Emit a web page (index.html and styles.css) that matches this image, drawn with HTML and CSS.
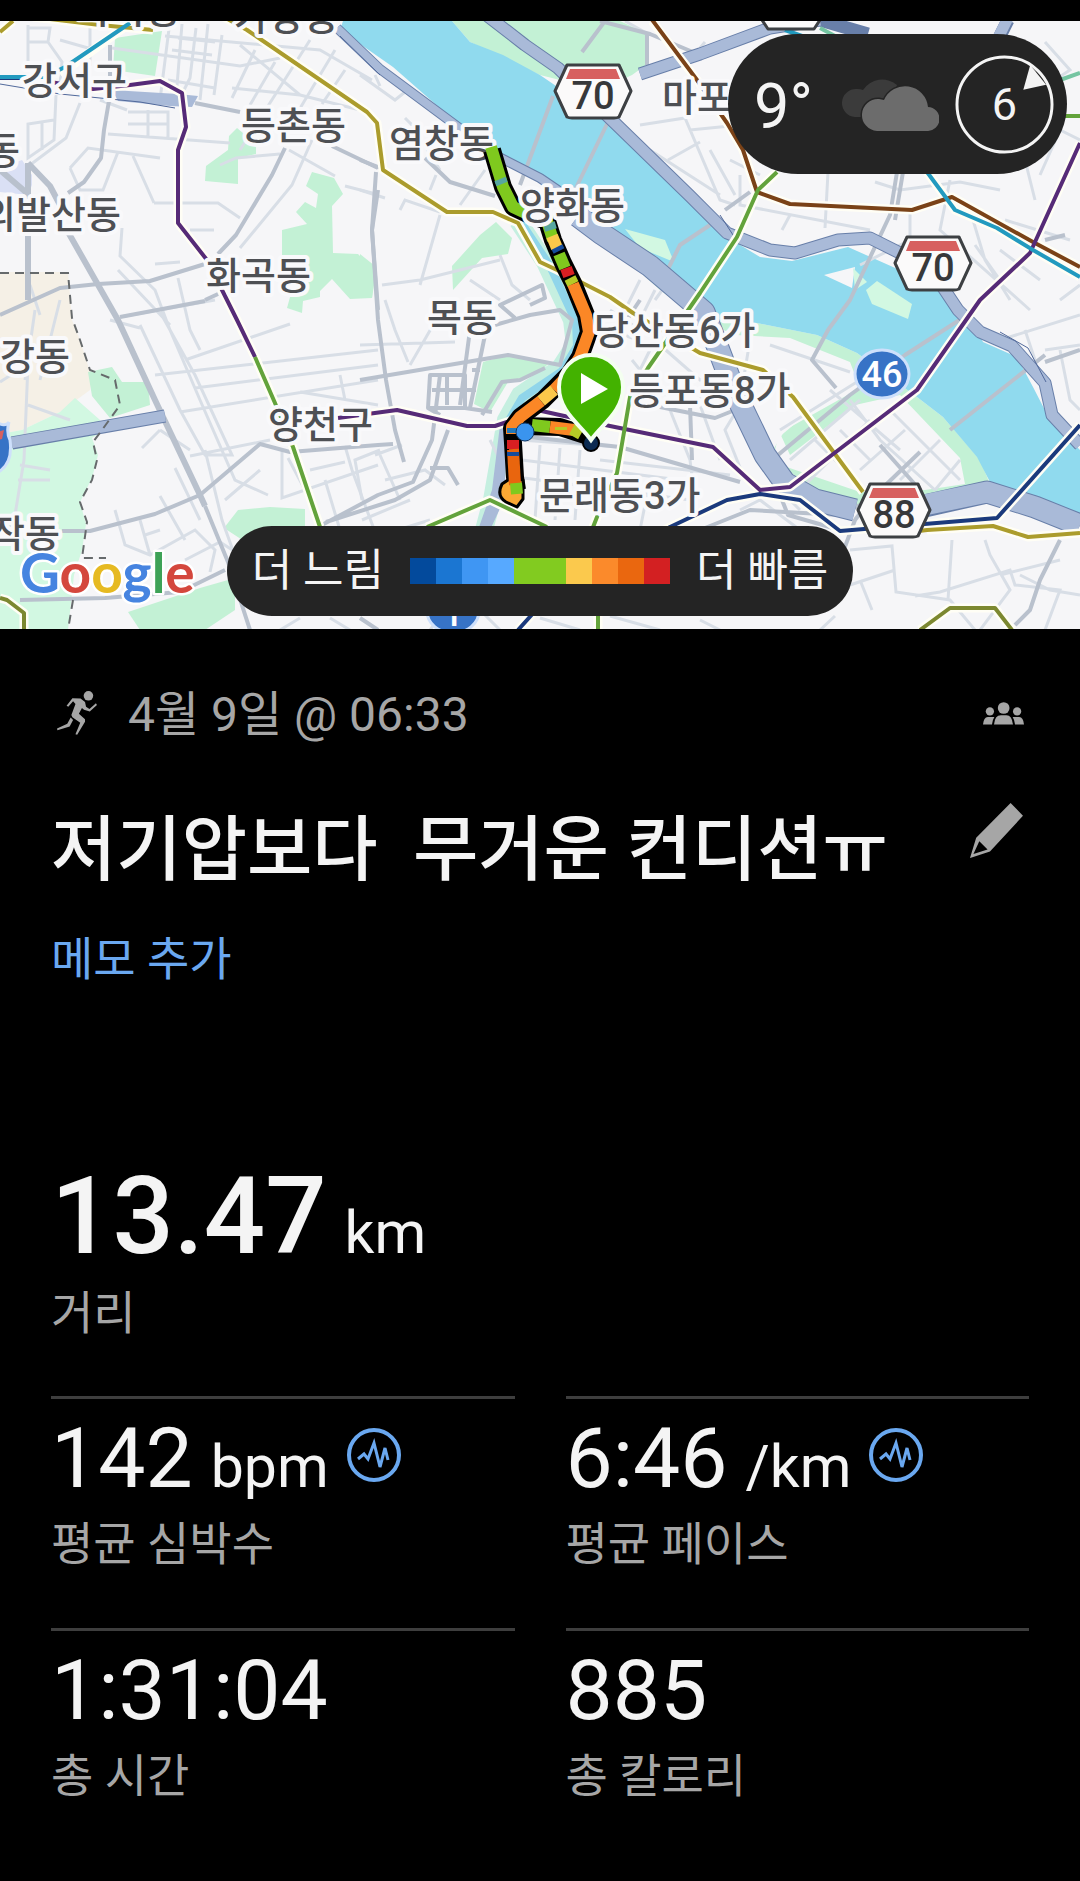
FILE: index.html
```
<!DOCTYPE html>
<html lang="ko">
<head>
    <meta charset="UTF-8">
    <meta name="viewport" content="width=device-width, initial-scale=1">
    <title>저기압보다 무거운 컨디션ㅠ</title>
    <link rel="stylesheet" href="styles.css">
</head>
<body>
    <section class="map">
        <svg class="map-canvas" viewBox="0 21 1080 608" role="img" aria-label="달리기 경로 지도">
            <rect class="land" x="0" y="21" width="1080" height="608"/>

            <!-- Areas -->
            <path class="beige" d="M0 272H68L72 320L80 340L92 378L90 390L60 412L22 430L0 434Z"/>
            <path class="lilac" d="M0 168L22 160L32 175V185L28 195L0 192Z"/>
            <path class="park-light" d="M0 434L22 430L60 412L75 398L100 420L104 430L92 438L98 455L92 478L80 502L86 524L82 550L74 575L68 630H0Z"/>
            <path class="park" d="M115 38L162 31L155 76L113 70Z"/>
            <path class="park" d="M237 128L256 144V154L238 158V184L205 181L206 166L228 150L229 136Z"/>
            <path class="park" d="M312 172L334 178L343 194L332 206L333 253L358 254L376 272L372 298L350 299L332 279L320 291V297L303 301L302 313L287 308L292 290L282 280V230L307 224L296 212L305 202L316 208L318 194L306 186Z"/>
            <path class="park" d="M88 372L112 367L122 382L148 382L150 405L110 418L92 396Z"/>
            <path class="park" d="M224 528L238 510L270 507L305 509V528L250 545Z"/>
            <path class="park" d="M128 612L200 588L235 578V610L205 630H140Z"/>
            <path class="park" d="M452 266L480 235L496 222L512 238L508 254L482 258L453 290Z"/>
            <path class="park" d="M360 254L375 266L372 298H360Z"/>
            <path class="park" d="M483 362L508 355L550 362L540 372L508 382L490 412L474 404Z"/>
            <path class="park" d="M452 21H620L648 34L646 65L632 75L600 90L540 75L470 42Z"/>
            <path class="park" d="M700 320L757 323L817 335L857 353L917 397L943 417L980 460L990 484L860 508L812 490L770 455L785 430L860 388L850 362L790 338L735 335Z"/>
            <path class="land" d="M735 335L790 345L850 372L842 384L778 438L772 462L860 492L925 490L965 484L960 458L900 395L855 405L790 455Z"/>

            <!-- River -->
            <path class="water" d="M343 21H452L470 42L503 55L540 75L610 123L677 183L727 237L760 257L792 261L848 247L893 267L947 292L973 323L983 342L1017 357L1033 387L1050 420L1080 450V517L1033 500L990 482L977 457L943 417L917 397L857 353L817 335L757 323L700 320L677 300L600 227L540 180L497 150L450 117L393 67L340 30Z"/>
            <path class="stream" d="M518 221L545 262L572 320L575 345L560 368L520 395L506 420L492 500L484 530"/>
            <path class="stream-water" d="M520 221L550 266L576 322L577 346L562 371L522 398L508 422"/>
            <path class="park-light" d="M625 229L665 240L674 262L640 248Z"/>
            <path class="park-light" d="M590 222L640 250L700 305L700 320L660 290L600 236Z"/>
            <path class="park-light" d="M866 290L877 281L912 304L908 319L872 304Z"/>
            <path class="land" d="M824 275L855 267L852 288Z"/>
            <path class="park-light" d="M853 268L867 282L855 290Z"/>

            <!-- Side streets -->
            <g class="street">
                <path d="M28 25V65M28 42H48L50 28H28M48 42L62 62L60 85M90 25V66M112 48L240 66L280 58M60 40L95 50"/>
                <path d="M165 36L320 50L372 80M170 21L160 100M182 24L176 98M196 28L190 78L180 98M208 24L200 100M222 35L214 95M178 38L215 42M172 50L212 55M168 80L215 88M240 45L300 95M255 50L232 98M275 62L250 105M310 40L240 150M335 50L290 125M345 70L322 104M232 88L300 95L360 110"/>
                <path d="M128 112H168V138M148 110V138M128 124H168M108 134L230 143M100 100L127 110M56 95L54 140L28 158V124L54 120M42 122V150M80 103L66 138L30 165M70 168L88 148L160 158M70 168L80 190H103L118 152M133 156L154 203M154 203H218L240 218M190 230H214M220 165L236 158L280 154M289 150L335 176M345 186L376 194M312 140L292 185L240 248"/>
                <path d="M122 228L120 256L155 290L170 330L200 400L235 480L268 495M120 317L215 300M155 264L180 262M178 278L190 330L200 350M140 325L180 410L205 455H232L195 375L160 312M110 320L140 328M185 360L290 324M155 375L378 350M195 388L378 365M180 412L378 380M300 392L378 405M190 456L270 440M340 375L345 400M282 450V498L305 490M142 448L160 430M160 430L190 450M118 270L170 325M175 468L200 520M288 458L305 490L378 465M345 446L352 470L378 540M325 480L340 530M310 470L345 462"/>
                <path d="M115 510L125 545L150 555L195 530L215 550L210 572M140 520L150 555M160 496L185 540M145 535L160 530M185 560L220 542L240 555M0 382L28 364L24 460L15 515L5 545M28 405L70 420M20 465L50 470M18 480H50M35 310L25 380M60 300L40 380M30 285L40 315M0 345L70 355M205 450L222 520L240 570M225 500L246 482L260 470"/>
                <path d="M360 75L395 100L405 92M380 86L375 75M405 118L412 125L440 170M430 190L436 175M460 205L485 170M400 210L405 200L440 212M360 190L385 198M500 255L512 285L530 300M440 215L420 285M470 280L500 300M382 285L420 280L500 260M385 300L395 330L408 362M360 345L455 342M432 327L410 365"/>
                <path d="M640 280L625 310M655 290L640 320M668 282L655 300M610 310L640 330M660 330L640 370L632 360M660 345L700 380L740 365M610 330L660 348M540 445L535 520M560 448L555 520M580 450L575 520M522 460L680 480M524 478L690 500M600 460L730 475M650 480L640 530M670 410L690 460L695 500M700 405L720 460M640 390L740 405L725 430L745 480M720 360L745 410"/>
                <path d="M640 125L685 118L720 200L735 205M650 150L720 195M690 130L740 125M668 160L700 142M625 21L650 35M705 42L690 60M730 160L760 175M740 175V205L870 230M710 150L735 195M790 215L782 230M828 172L825 228M875 182L900 190L960 182L1000 190M910 212V240L860 265M950 180L940 230L1030 310M970 210L985 260L1010 300M1000 250L1040 280M1005 220L1070 240M1060 300L1080 285M1035 200L1025 160M1045 42L1070 70L1040 90M1040 175L1060 130L1080 140M1000 280L975 245"/>
                <path d="M750 340L740 400M770 345L850 372M780 430L860 380M850 400L880 440L935 490M830 390L900 450M870 420L800 490M890 410L960 480M815 440L845 470M860 400L790 460M905 430L860 470M840 430L870 460M770 480L800 510M940 440L900 480M960 460L935 490M1000 340L1080 315M1025 330L1035 360M1045 350L1080 345M1060 350L1070 400L1080 410"/>
                <path d="M740 510L760 500L800 530M850 550L892 546L896 592L950 600L975 630M952 540L948 600M985 540L990 555L1010 590L980 630M915 596L940 592L1010 570L1015 585L1060 590L1045 630M1020 575L1050 590L1080 595M895 570L850 585M1000 575L1060 560M860 580L872 610M380 570L410 590M470 600L500 630M540 618L580 630M610 616L660 630M700 620L720 630M330 618L350 630M280 630L300 618M440 616L430 630M820 630L835 616"/>
                <path d="M362 500L355 460L380 450M380 455L400 500M375 455L402 445M362 520L410 500M365 540L430 520M385 480L425 470L445 485M490 440L505 470M520 440L620 447"/>
            </g>

            <!-- Main roads -->
            <g class="road">
                <path d="M110 45V95L104 130L101 158L84 182L68 193"/>
                <path d="M0 170L28 194M28 163V300" class="road-wide"/>
                <path d="M28 163L50 186L60 205" class="road-wide"/>
                <path d="M68 232L118 320L155 400L200 495L205 506" class="road-wide"/>
                <path d="M205 506L228 562L250 630"/>
                <path d="M0 315L60 288L98 284L150 281L205 264M205 300L218 294" />
                <path d="M120 317L205 301" />
                <path d="M195 103L240 112M332 146L378 168"/>
                <path d="M285 148L272 175L236 235L218 254"/>
                <path d="M378 190L372 230L378 320L386 380L395 430L404 462"/>
                <path d="M62 531H90L155 514L200 495L260 444L290 452L378 445L393 444"/>
                <path d="M20 600L105 598L180 592L225 570"/>
                <path d="M320 526L378 495L413 482L432 440L440 375M326 522L395 500L430 480L448 430"/>
                <path d="M430 375H465V408H428ZM432 390H462M447 375V405M465 408L492 412M428 408L440 415M485 335L470 408M470 330L460 405M472 370H480M466 390H476"/>
                <path d="M360 380L508 355L560 365L572 320L560 310L530 315L495 325M545 368L520 380L502 382L482 415"/>
                <path d="M360 160L386 170M376 172L372 230L378 310M425 158L450 182L495 196"/>
                <path d="M605 21L582 52M553 96L520 185M608 122L575 190M647 32V65M600 21L650 34L700 55M530 305L545 298L542 285L500 305L515 318M430 468H448L458 485"/>
                <path d="M710 225L680 245L660 285M640 300L620 330"/>
                <path d="M897 172L890 215L850 300L828 330L812 360L836 388M975 310L905 355L850 395L778 455M903 172L895 220"/>
                <path d="M520 436L620 447L740 482M632 390L650 405L715 418L735 410M690 405L692 460"/>
                <path d="M880 445L920 490M920 452L870 500L855 520L840 560M780 495L788 515L840 530M700 530L750 510L840 515L860 505"/>
                <path d="M1060 540L1040 580L1030 610L1015 625M1045 355L950 430M1080 350L1045 362M725 210L750 192M360 618L378 630M1045 240L1065 235"/>
            </g>

            <!-- Expressways -->
            <path class="highway-edge highway-thin" d="M337 28L380 69L450 121L497 156L540 178L590 212L612 236"/>
            <path class="highway highway-thin" d="M337 28L380 69L450 121L497 156L540 178L590 212L612 236"/>
            <path class="highway-edge highway-thick" d="M578 216L602 234L650 266L704 312L715 340L736 395L765 455L785 483L815 500L855 510M920 507L987 492L1035 507L1080 525"/>
            <path class="highway highway-thick" d="M578 216L602 234L650 266L704 312L715 340L736 395L765 455L785 483L815 500L855 510M900 510L987 492L1035 507L1080 525"/>
            <path class="highway-edge highway-mid" d="M485 14L525 45L558 68L620 128L690 196L727 233L770 250L795 253L838 240L870 238L930 268L958 310L980 332L1012 346L1045 383L1052 415L1080 445M640 74L700 54L770 28L820 20L868 34"/>
            <path class="highway highway-mid" d="M485 14L525 45L558 68L620 128L690 196L727 233L770 250L795 253L838 240L870 238L930 268L958 310L980 332L1012 346L1045 383L1052 415L1080 445M640 74L700 54L770 28L820 20"/>
            <path class="highway-edge highway-mid" d="M1008 20L998 40M12 443L165 416"/>
            <path class="highway highway-mid" d="M1010 14L996 42M10 443L165 416"/>
            <path class="highway-fill" d="M112 90L178 94L198 96L192 107L170 106L118 101Z"/>
            <path class="highway-fill" d="M500 425L508 425L504 500L490 530H478L492 490Z"/>
            <path class="line-thin" d="M0 84L60 94L140 102L175 108M340 36L380 75M1000 332L1028 348L1046 382M720 215L735 238"/>

            <!-- Administrative border -->
            <path class="border" d="M0 273H68L72 318L80 340L90 370L115 380L120 405L102 430L93 442L97 460L92 480L80 502L87 522L82 558L106 558M73 600L68 630"/>

            <!-- Subway lines -->
            <g class="subway-halo">
                <path d="M0 32L13 21M33 17L100 25L153 30M224 17L247 30L367 112L377 123L383 170L447 212H493L518 223L540 262L557 270L610 297L633 313L700 353L763 370L793 397L863 492M927 530L993 526L1028 537L1080 533"/>
                <path d="M93 89L130 85L160 81L182 93L186 127L178 150V223L207 260L237 320L255 357L275 403L293 447L320 527M338 418L397 410L467 426H495L507 422L537 410L610 426L713 447L760 490L790 487L917 390L980 300L1030 253L1080 143"/>
                <path d="M427 527L490 500L547 527M777 172L758 190L737 237L700 293L648 368L630 397L617 473L597 517L588 540L598 600V630M652 21L697 80L727 123L743 150L757 192L790 204L912 210L952 197L1033 242L1080 267M927 172L955 210L997 228L1033 250L1080 277M518 630L545 600L670 527L727 500L760 494L800 500L840 531L997 518L1080 425M920 630L950 608H995L1012 630M0 598L7 600L24 613V630M60 74L130 23"/>
            </g>
            <g class="subway">
                <path class="line-yellow" d="M0 32L13 21M33 17L100 25L153 30M224 17L247 30L367 112L377 123L383 170L447 212H493L518 223L540 262L557 270L610 297L633 313L700 353L763 370L793 397L863 492M895 534L927 530L993 526L1028 537L1080 533"/>
                <path class="line-brown" d="M650 17L697 80L727 123L743 150L757 192L790 204L912 210L952 197L1033 242L1080 267"/>
                <path class="line-olive" d="M920 630L950 608H995L1012 630M0 598L7 600L24 613V630"/>
                <path class="line-purple" d="M50 82L93 89L130 85L160 81L182 93L186 127L178 150V223L207 260L237 320L255 357M338 418L397 410L467 426H495L507 422L537 410L610 426L713 447L760 490L790 487L917 390L980 300L1030 253L1080 143"/>
                <path class="line-green" d="M255 357L275 403L293 447L320 527L330 560M427 527L490 500L547 527M777 172L758 190L737 237L700 293L648 368L630 397L617 473L597 517L588 540L598 600V630M1060 116H1080"/>
                <path class="line-navy" d="M518 630L545 600L670 527L727 500L760 494L800 500L840 531L997 518L1080 425M0 78H22"/>
                <path class="line-cyan" d="M0 77H45L65 67L130 23M785 30L802 36M927 172L955 210L997 228L1033 250L1080 277"/>
                <path class="line-mint" d="M820 28L835 36M1060 80L1080 73"/>
            </g>

            <!-- District labels -->
            <g class="label">
                <text x="76" y="23">마곡동</text>
                <text x="234" y="30">가양동</text>
                <text x="22" y="94">강서구</text>
                <text x="241" y="139">등촌동</text>
                <text x="-15" y="164">동</text>
                <text x="-19" y="228">의발산동</text>
                <text x="206" y="289">화곡동</text>
                <text x="389" y="157">염창동</text>
                <text x="427" y="331">목동</text>
                <text x="0" y="370">강동</text>
                <text x="268" y="438">양천구</text>
                <text x="-10" y="547">작동</text>
                <text x="662" y="111">마포</text>
            </g>

            <!-- Route, coloured by pace -->
            <path class="route-edge" d="M492 150L503 187L513 207L530 215L547 221L553 240L563 263L573 283L586 315L589 332L580 357L570 373L543 400L520 417L512 428L513 443L515 477L517 490"/>
            <path class="route-edge" d="M522 426L560 427L588 436"/>
            <path class="route-end" d="M511 478L502 484Q496 496 506 502L517 507L523 499V480Z"/>
            <g class="route">
                <path class="pace-green" d="M491 147L503 187L513 207L530 215L547 221L553 240"/>
                <path class="pace-sky" d="M500 179L502 184M549 223L551 230"/>
                <path class="pace-yellow" d="M552 236L557 248"/>
                <path class="pace-green" d="M559 254L565 268"/>
                <path class="pace-navy" d="M557 247L559 251"/>
                <path class="pace-red" d="M566 268L569 276"/>
                <path class="pace-lime" d="M570 278L573 284"/>
                <path class="pace-orange" d="M573 284L586 315L589 332L580 357L570 373L554 390"/>
                <path class="pace-yellow" d="M554 390L541 401"/>
                <path class="pace-orange" d="M541 401L520 417L512 427V434"/>
                <path class="pace-blue" d="M513 428V433"/>
                <path class="pace-red" d="M513 440V449"/>
                <path class="pace-deep" d="M513 449L515 485"/>
                <path class="pace-navy" d="M513 452V456"/>
                <path class="pace-green" d="M516 483L517 494"/>
                <path class="pace-green" d="M532 425L550 427"/>
                <path class="pace-orange" d="M550 427L574 430"/>
                <path class="pace-lime" d="M561 427V430M572 429L581 434"/>
            </g>
            <circle class="dot-blue" cx="525" cy="432" r="9"/>
            <circle class="dot-end" cx="591" cy="443" r="8"/>

            <g class="label">
                <text x="520" y="219">양화동</text>
                <text x="594" y="344">당산동6가</text>
                <text x="629" y="404">등포동8가</text>
                <text x="539" y="509">문래동3가</text>
            </g>

            <path class="pin" d="M591 440C580 424 559 412 559 387A32 32 0 0 1 623 387C623 412 602 424 591 440Z"/>
            <path class="pin-play" d="M581 373L608 389L581 404Z"/>

            <!-- Road numbers -->
            <g>
                <g class="shield" transform="translate(593 91)">
                    <path class="shield-body" d="M-26 -26H26L38 0L26 26Q24 27 21 27H-21Q-24 27 -26 26L-38 0Z"/>
                    <path class="shield-top" d="M-23 -22H23L27 -12H-27Z"/>
                    <text y="18">70</text>
                </g>
                <g class="shield" transform="translate(933 263)">
                    <path class="shield-body" d="M-26 -26H26L38 0L26 26Q24 27 21 27H-21Q-24 27 -26 26L-38 0Z"/>
                    <path class="shield-top" d="M-23 -22H23L27 -12H-27Z"/>
                    <text y="18">70</text>
                </g>
                <g class="shield" transform="translate(894 510)">
                    <path class="shield-body" d="M-24 -26H24L36 0L24 26Q22 27 19 27H-19Q-22 27 -24 26L-36 0Z"/>
                    <path class="shield-top" d="M-21 -22H21L25 -12H-25Z"/>
                    <text y="18">88</text>
                </g>
                <path class="shield-body" d="M754 3L762 20L768 29H814L820 20L828 3Z"/>
                <ellipse class="route-badge" cx="882" cy="374" rx="27" ry="24"/>
                <text class="route-number" x="882" y="387">46</text>
                <ellipse class="route-badge" cx="453" cy="611" rx="26" ry="22"/>
                <text class="route-number" x="453" y="626">1</text>
                <path class="route-badge" d="M-5 421Q5 428 9 422Q6 432 10 440Q13 462 0 471H-5Z"/>
                <path class="shield-top" d="M-2 432L4 430L2 439L-2 440Z"/>
            </g>

            <text class="google" x="20" y="593"><tspan class="g-blue">G</tspan><tspan class="g-red">o</tspan><tspan class="g-yellow">o</tspan><tspan class="g-blue">g</tspan><tspan class="g-green">l</tspan><tspan class="g-red">e</tspan></text>
        </svg>

        <div class="weather">
            <span class="temperature">9°</span>
            <svg class="cloud" viewBox="0 0 98 54" aria-hidden="true">
                <path fill="#3b3b3b" d="M14 40A14 14 0 0 1 16 12Q20 12 22 13A23 23 0 0 1 56 8L50 30L25 40Z"/>
                <path class="cloud-front" d="M36 54A16 16 0 0 1 38 22L43 23A23 23 0 0 1 87 30A12 12 0 0 1 86 54Z"/>
            </svg>
            <div class="wind">
                <svg viewBox="0 0 100 100" aria-hidden="true">
                    <circle cx="50" cy="50" r="48"/>
                    <path d="M76 10L92 30L69 35Z"/>
                </svg>
                <span>6</span>
            </div>
        </div>

        <div class="legend">
            <span>더 느림</span>
            <div class="scale">
                <i class="c1"></i><i class="c2"></i><i class="c3"></i><i class="c4"></i><i class="c5"></i><i class="c5"></i><i class="c6"></i><i class="c7"></i><i class="c8"></i><i class="c9"></i>
            </div>
            <span>더 빠름</span>
        </div>
    </section>

    <main class="details">
        <div class="date-row">
            <svg class="icon-run" viewBox="167 96 117 129" aria-hidden="true">
                <circle cx="259" cy="110" r="14"/>
                <path d="M212 117L236 118L249 128L252 142L262 149L281 132L284 137L263 156L246 151L240 146L231 163L249 179L249 186L226 224L221 223L235 189L212 173L209 166L221 134L214 126L200 142L195 139Z"/>
                <path d="M207 174L214 181L204 200L168 211L167 206L197 192Z"/>
            </svg>
            <time>4월 9일 @ 06:33</time>
            <svg class="icon-people" viewBox="1286 128 119 66" aria-hidden="true">
                <circle cx="1346" cy="145" r="17"/>
                <circle cx="1306" cy="155" r="12"/>
                <circle cx="1385" cy="155" r="12"/>
                <path d="M1318 193Q1320 166 1338 166H1354Q1370 166 1373 193Z"/>
                <path d="M1286 193Q1288 171 1300 171H1319Q1313 180 1312 193Z"/>
                <path d="M1405 193Q1403 171 1391 171H1372Q1378 180 1379 193Z"/>
            </svg>
        </div>

        <div class="title-row">
            <h1>저기압보다&nbsp; 무거운 컨디션ㅠ</h1>
            <button class="edit" type="button" aria-label="제목 편집">
                <svg viewBox="1250 430 154 160" aria-hidden="true">
                    <path fill-rule="evenodd" d="M1368 430L1404 467L1308 571L1250 590L1268 531ZM1277 541L1260 578L1301 565Z"/>
                </svg>
            </button>
        </div>
        <a class="memo" href="#memo">메모 추가</a>

        <div class="distance">
            <div class="value"><strong>13.47</strong> <span class="unit">km</span></div>
            <div class="name">거리</div>
        </div>

        <div class="stats">
            <div class="stat">
                <div class="value">142 <span class="unit">bpm</span>
                    <svg class="pulse" viewBox="0 0 54 54" aria-hidden="true">
                        <circle cx="27" cy="27" r="25"/>
                        <path d="M11 31L17 26L21 31L27 15L33 39L38 20L41 32"/>
                    </svg>
                </div>
                <div class="name">평균 심박수</div>
            </div>
            <div class="stat">
                <div class="value">6:46 <span class="unit">/km</span>
                    <svg class="pulse" viewBox="0 0 54 54" aria-hidden="true">
                        <circle cx="27" cy="27" r="25"/>
                        <path d="M11 31L17 26L21 31L27 15L33 39L38 20L41 32"/>
                    </svg>
                </div>
                <div class="name">평균 페이스</div>
            </div>
            <div class="stat">
                <div class="value">1:31:04</div>
                <div class="name">총 시간</div>
            </div>
            <div class="stat">
                <div class="value">885</div>
                <div class="name">총 칼로리</div>
            </div>
        </div>
    </main>
</body>
</html>
```
FILE: styles.css
```
* {
    box-sizing: border-box;
}
body {
    margin: 0;
    padding-top: 21px;
    background: #000;
    color: #f4f4f4;
    font-family: Roboto, "Noto Sans CJK KR", sans-serif;
}

/* Map */
.map {
    position: relative;
    overflow: hidden;
}
.map-canvas {
    display: block;
    width: 100%;
}
.land { fill: #f6f6f8; }
.beige { fill: #f5f0e6; }
.lilac { fill: #dae0f5; }
.park { fill: #c3f1d5; }
.park-light { fill: #d2f8e2; }
.water { fill: #90daee; }
.stream, .stream-water {
    fill: none;
    stroke: #c5efe0;
    stroke-width: 18;
}
.stream-water {
    stroke: #90d5ea;
    stroke-width: 8;
}
.street {
    fill: none;
    stroke: #d8dee6;
    stroke-width: 3;
}
.road {
    fill: none;
    stroke: #b9c1cd;
    stroke-width: 4;
    stroke-linejoin: round;
}
.road-wide { stroke-width: 6; }
.highway, .highway-edge {
    fill: none;
    stroke-linejoin: round;
}
.highway { stroke: #a9bad8; }
.highway-edge { stroke: #687fa9; }
.highway-thin { stroke-width: 8; }
.highway-mid { stroke-width: 11; }
.highway-thick { stroke-width: 21; }
.highway-edge.highway-thin { stroke-width: 10; }
.highway-edge.highway-mid { stroke-width: 13; }
.highway-edge.highway-thick { stroke-width: 23; }
.highway-fill { fill: #a9bad8; }
.line-thin {
    fill: none;
    stroke: #51699b;
    stroke-width: 1;
}
.border {
    fill: none;
    stroke: #666a6c;
    stroke-width: 2;
    stroke-dasharray: 9 6;
}
.subway-halo, .subway {
    fill: none;
    stroke-width: 4;
    stroke-linejoin: round;
}
.subway-halo {
    stroke: #fffef5;
    stroke-width: 9;
}
.line-yellow { stroke: #ab9c2c; }
.line-brown { stroke: #7a4217; }
.line-olive { stroke: #7c8830; }
.line-purple { stroke: #562b77; }
.line-green { stroke: #63a33b; }
.line-navy { stroke: #1b3a7c; }
.line-cyan { stroke: #229abf; }
.line-mint { stroke: #75c5a2; }
.label {
    font-size: 38px;
    font-weight: 500;
    fill: #4e5054;
    stroke: #f9f9fb;
    stroke-width: 8;
    stroke-linejoin: round;
    paint-order: stroke;
}
.route-edge, .route {
    fill: none;
    stroke-linejoin: round;
}
.route-edge {
    stroke: #000;
    stroke-width: 18;
}
.route { stroke-width: 12; }
.route-end {
    fill: #fba834;
    stroke: #000;
    stroke-width: 3;
    stroke-linejoin: round;
}
.pace-green { stroke: #7fc91e; }
.pace-lime { stroke: #b6cb26; }
.pace-yellow { stroke: #fbc84a; }
.pace-orange { stroke: #fb8726; }
.pace-deep { stroke: #e9650e; }
.pace-red { stroke: #d81f22; }
.pace-sky { stroke: #57a7a0; }
.pace-blue { stroke: #2478b8; }
.pace-navy { stroke: #154b9b; }
.dot-blue {
    fill: #3a94ee;
    stroke: #123a68;
}
.dot-end {
    fill: #0c2b52;
    stroke: #000;
    stroke-width: 2;
}
.pin {
    fill: #43b200;
    stroke: #f4fff0;
    stroke-width: 4;
}
.pin-play { fill: #fff; }
.shield {
    font-size: 38px;
    font-weight: 500;
    text-anchor: middle;
    fill: #37383a;
}
.shield-body {
    fill: #fbfafa;
    stroke: #3d4043;
    stroke-width: 3;
    stroke-linejoin: round;
}
.shield-top { fill: #d7605f; }
.route-badge {
    fill: #3773c6;
    stroke: #cee0fb;
    stroke-width: 3;
}
.route-number {
    font-size: 36px;
    font-weight: 500;
    text-anchor: middle;
    fill: #fff;
}
.google {
    font-family: Lato, sans-serif;
    font-size: 55px;
    font-weight: 700;
    stroke: #fff;
    stroke-width: 5;
    stroke-linejoin: round;
    paint-order: stroke;
}
.g-blue { fill: #4684e0; }
.g-red { fill: #d4473d; }
.g-yellow { fill: #e6ba22; }
.g-green { fill: #3ea257; }

.weather {
    position: absolute;
    top: 13px;
    right: 13px;
    display: flex;
    align-items: center;
    height: 140px;
    padding: 0 13px 0 26px;
    border-radius: 70px;
    background: #242424;
}
.temperature {
    width: 87px;
    padding-top: 4px;
    font-size: 63px;
}
.cloud {
    width: 98px;
    height: 54px;
    margin-right: 16px;
}
.cloud-front {
    fill: #6c6c6c;
    stroke: #242424;
    stroke-width: 3;
    paint-order: stroke;
}
.wind {
    display: grid;
    place-items: center;
    width: 99px;
    font-size: 45px;
}
.wind svg, .wind span {
    grid-area: 1 / 1;
}
.wind circle {
    fill: none;
    stroke: #f4f4f4;
    stroke-width: 3;
}
.wind path { fill: #f4f4f4; }

.legend {
    position: absolute;
    bottom: 13px;
    left: 50%;
    display: flex;
    align-items: center;
    justify-content: center;
    gap: 26px;
    width: 626px;
    height: 90px;
    border-radius: 45px;
    background: #242424;
    font-size: 44px;
    line-height: 60px;
    white-space: nowrap;
    transform: translateX(-50%);
}
.scale { display: flex; }
.scale i {
    width: 26px;
    height: 26px;
}
.c1 { background: #034a9c; }
.c2 { background: #1b76d2; }
.c3 { background: #3f96f3; }
.c4 { background: #57a9ff; }
.c5 { background: #82cb20; }
.c6 { background: #fbc94d; }
.c7 { background: #fb8a2b; }
.c8 { background: #ea670f; }
.c9 { background: #d32022; }

/* Activity details */
.details {
    padding: 54px 51px 40px;
}
.date-row {
    display: flex;
    align-items: center;
    height: 60px;
    color: #a6a6a6;
    font-size: 48px;
}
.date-row svg {
    fill: #a6a6a6;
}
.date-row time {
    padding-bottom: 6px;
}
.icon-run {
    width: 40px;
    height: 44px;
    margin: 0 31px 0 6px;
}
.icon-people {
    width: 41px;
    height: 23px;
    margin: 0 5px 0 auto;
}
.title-row {
    display: flex;
    align-items: center;
    justify-content: space-between;
    height: 100px;
    margin-top: 57px;
}
.title-row h1 {
    margin: 0;
    font-size: 71px;
    font-weight: 500;
    line-height: 100px;
}
.edit {
    align-self: flex-start;
    width: 53px;
    height: 55px;
    margin: 3px 6px 0 0;
    padding: 0;
    border: none;
    background: none;
    cursor: pointer;
}
.edit svg {
    display: block;
    fill: #a6a6a6;
}
.memo {
    display: inline-block;
    margin-top: 29px;
    color: #6aa8f0;
    font-size: 46px;
    line-height: 60px;
    text-decoration: none;
}
.value {
    display: flex;
    align-items: baseline;
    gap: 18px;
    height: 90px;
    font-size: 84px;
    line-height: 90px;
}
.unit {
    font-size: 59px;
}
.name {
    margin-top: 10px;
    color: #a6a6a6;
    font-size: 46px;
    line-height: 60px;
}
.distance {
    margin: 167px 0 53px;
}
.distance .value {
    height: 117px;
    font-size: 108px;
    line-height: 120px;
}
.distance strong {
    font-weight: 500;
}
.stats {
    display: grid;
    grid-template-columns: 1fr 1fr;
    column-gap: 51px;
}
.stat {
    padding: 15px 0 54px;
    border-top: 3px solid #3e3e3e;
}
.pulse {
    align-self: flex-start;
    width: 54px;
    height: 54px;
    margin-top: 14px;
    fill: none;
    stroke: #6aa8f0;
    stroke-width: 4;
}
.pulse path {
    stroke-width: 3;
}
```
